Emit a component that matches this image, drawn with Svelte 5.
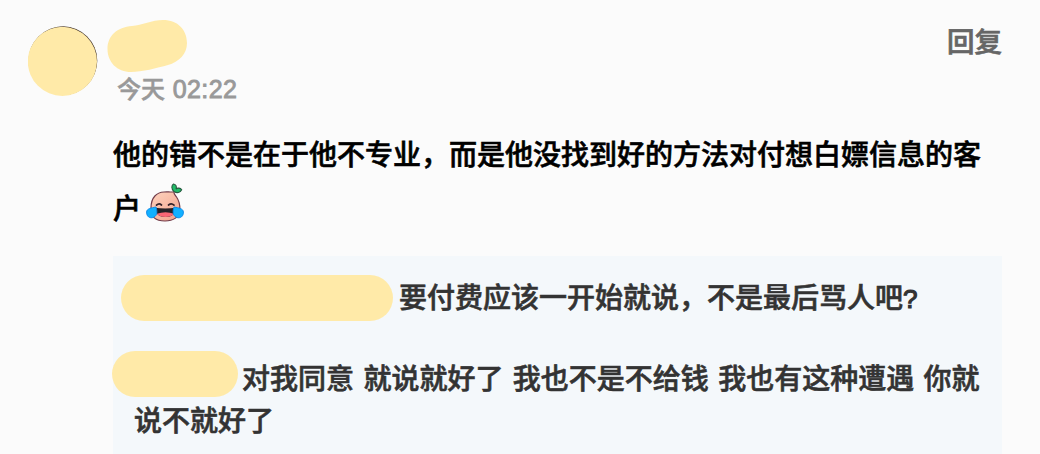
<script lang="ts">
	const comment = {
		date: '今天',
		time: '02:22',
		text: '他的错不是在于他不专业，而是他没找到好的方法对付想白嫖信息的客户'
	};

	const replies = [
		{ size: 'long', text: '要付费应该一开始就说，不是最后骂人吧', end: '?' },
		{ size: 'short', text: '对我同意 就说就好了 我也不是不给钱 我也有这种遭遇 你就说不就好了', end: '' }
	];
</script>

<article class="comment">
	<svg class="avatar" viewBox="0 0 70 71" aria-hidden="true">
		<circle cx="34.9" cy="34.7" r="34.4" fill="#3a2a20" />
		<circle cx="34.4" cy="35.4" r="34.6" fill="#ffeaa8" />
	</svg>

	<div class="main">
		<header>
			<div class="user">
				<svg class="name" viewBox="0 0 80 53" aria-hidden="true">
					<path d="M25 6 C35 5 45 0 56 0 C71 0 80 10 80 23 C80 34 72 42 61 45 C50 48 35 52 24 52 C10 52 0.5 42 0.5 29 C0.5 16 10 7 25 6Z" fill="#ffeaa8" />
				</svg>
				<div class="date">{comment.date} <span class="time">{comment.time}</span></div>
			</div>
			<button>回复</button>
		</header>

		<p class="text">{comment.text}<svg class="emoji" viewBox="0 0 38 40" role="img" aria-label="笑哭">
				<defs>
					<linearGradient id="skin" x1="0" y1="0" x2="0.7" y2="1">
						<stop offset="0" stop-color="#fdd3be" />
						<stop offset="1" stop-color="#f4a792" />
					</linearGradient>
				</defs>
				<path d="M5 25 C5 14 11 9.3 18 9 C22 8.8 25 9.2 28 8.8 C27.5 10.5 29 12 30.5 14 C33 17.5 34 22 34 27 C34 34 27 38 19 38 C10 38 4 34 5 25Z" fill="url(#skin)" stroke="#713b49" stroke-width="1.2" />
				<path d="M28 8.5 C25 6 25.5 2 27.5 1 C30 1.5 31 3.5 30 6 C31.5 4.5 34.5 5 35.7 6.7 C34 10 31 10.3 28 8.5Z" fill="#20bd68" stroke="#285b42" stroke-width="1.1" />
				<path d="M10.5 22.2 Q13 19.8 15.5 22 M22.5 22 Q25.5 19.8 28 22.2" fill="none" stroke="#35232a" stroke-width="1.7" stroke-linecap="round" />
				<path d="M9 24.8 Q19 26 30 24.8 C29.5 31 26 34 19.5 34 C13 34 9.5 31 9 24.8Z" fill="#242126" />
				<path d="M10.8 30.8 Q19.5 27.5 28.2 30.8 C26 33.4 23 34 19.5 34 C16 34 13 33.4 10.8 30.8Z" fill="#fb6675" />
				<path d="M10 24 C11.8 29 11 34 6 34.8 C2 35 0.5 32 0.6 29 C0.8 25.5 5 25 10 24Z M28 24 C26.2 29 27 34 32 34.8 C36 35 37.5 32 37.4 29 C37.2 25.5 33 25 28 24Z" fill="#12b0ff" stroke="#0a86e6" stroke-width="0.9" />
			</svg></p>

		<div class="replies">
			{#each replies as reply}
				<p class="reply {reply.size}">
					<span class="mask"></span>{reply.text}{#if reply.end}<span class="end">{reply.end}</span>{/if}
				</p>
			{/each}
		</div>
	</div>
</article>

<style>
	:global(body) {
		margin: 0;
		background: #fbfbfb;
	}

	.comment {
		display: flex;
		box-sizing: border-box;
		width: 1040px;
		height: 454px;
		padding: 20px 38px 0 28px;
		overflow: hidden;
		color: #000;
		font-family: "Liberation Sans", "Noto Sans CJK SC", sans-serif;
		font-size: 28px;
		font-weight: 500;
	}

	.avatar {
		flex: none;
		width: 70px;
		height: 71px;
		margin: 6px 15px 0 0;
	}

	.main {
		flex: 1;
		min-width: 0;
	}

	header {
		display: flex;
		justify-content: space-between;
		height: 109px;
	}

	.name {
		display: block;
		width: 80px;
		height: 53px;
		margin-left: -6px;
	}

	.date {
		margin: -2px 0 0 4px;
		color: #999;
		font-size: 24px;
		line-height: 36px;
		-webkit-text-stroke: 0.5px;
	}

	.time {
		margin-left: 1px;
		font-size: 25px;
		letter-spacing: 0.4px;
		-webkit-text-stroke: 0.9px;
	}

	button {
		align-self: flex-start;
		margin: 0;
		padding: 0;
		border: 0;
		background: none;
		color: #666;
		font: 500 27.5px/40px "Noto Sans CJK SC", sans-serif;
		-webkit-text-stroke: 0.7px;
		cursor: pointer;
	}

	.text {
		margin: 0;
		line-height: 54px;
		-webkit-text-stroke: 0.6px;
	}

	.emoji {
		width: 38px;
		height: 40px;
		margin: -4px 0 0 5px;
		vertical-align: -4px;
	}

	.replies {
		box-sizing: border-box;
		width: 889px;
		height: 240px;
		margin-top: 19px;
		padding: 22px 20px 0 21px;
		background: #f4f8fb;
		color: #333;
	}

	.reply {
		margin: 0;
		line-height: 42px;
		word-spacing: 1.6px;
		-webkit-text-stroke: 0.6px;
	}

	.reply + .reply {
		margin-top: 39px;
	}

	.mask {
		display: inline-block;
		height: 46px;
		border-radius: 23px;
		background: #ffeaa8;
		vertical-align: middle;
	}

	.long .mask {
		width: 272px;
		margin: -8px 6px -3px -13px;
	}

	.short .mask {
		width: 126px;
		margin: -14px 4px 2px -22px;
	}

	.end {
		font-size: 26px;
		-webkit-text-stroke: 1.2px;
	}
</style>
